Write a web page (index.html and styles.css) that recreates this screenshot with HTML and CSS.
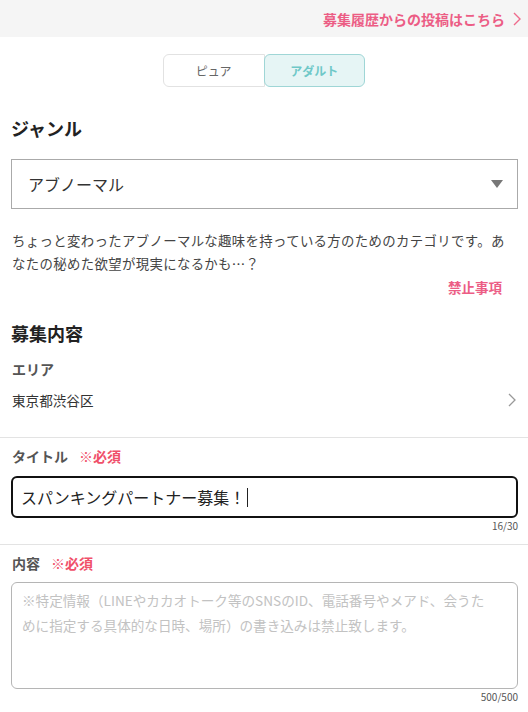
FILE: index.html
```html
<!DOCTYPE html>
<html lang="ja">
<head>
    <meta charset="UTF-8">
    <meta name="viewport" content="width=device-width, initial-scale=1.0">
    <title>募集投稿</title>
    <link rel="stylesheet" href="styles.css">
</head>
<body>
    <div class="history-bar">
        <a class="history-link" href="#">募集履歴からの投稿はこちら
            <svg class="chev" width="8" height="14" viewBox="0 0 8 14"><path d="M1 1l6 6-6 6" fill="none" stroke="#ef6b8c" stroke-width="1.4"/></svg>
        </a>
    </div>

    <div class="mode-toggle">
        <button class="mode-btn">ピュア</button>
        <button class="mode-btn active">アダルト</button>
    </div>

    <div class="container">
        <h2 class="section-title genre-title">ジャンル</h2>
        <div class="select-box">
            <span>アブノーマル</span>
            <svg width="12" height="8" viewBox="0 0 12 8"><path d="M0 0h12L6 8z" fill="#777"/></svg>
        </div>
        <p class="genre-desc">ちょっと変わったアブノーマルな趣味を持っている方のためのカテゴリです。あなたの秘めた欲望が現実になるかも…？</p>
        <div class="ban-row"><a href="#" class="ban-link">禁止事項</a></div>

        <h2 class="section-title recruit-title">募集内容</h2>
        <div class="field-label area-label">エリア</div>
        <div class="area-row">
            <span>東京都渋谷区</span>
            <svg width="8" height="14" viewBox="0 0 8 14"><path d="M1 1l6 6-6 6" fill="none" stroke="#999" stroke-width="1.3"/></svg>
        </div>
    </div>

    <div class="divider"></div>

    <div class="container">
        <div class="field-label req-label">タイトル<span class="required">※必須</span></div>
        <div class="title-input">スパンキングパートナー募集！<span class="caret"></span></div>
        <div class="counter">16/30</div>
    </div>

    <div class="divider second"></div>

    <div class="container">
        <div class="field-label req-label">内容<span class="required">※必須</span></div>
        <div class="body-input">
            <span class="placeholder">※特定情報（LINEやカカオトーク等のSNSのID、電話番号やメアド、会うために指定する具体的な日時、場所）の書き込みは禁止致します。</span>
        </div>
        <div class="counter">500/500</div>
    </div>
</body>
</html>
```

FILE: styles.css
```css
body {
    font-family: 'Noto Sans CJK JP', 'Noto Sans', sans-serif;
    color: #333;
    background-color: #fff;
    margin: 0;
    padding: 0;
}
.container {
    padding: 0 10px 0 11px;
}
.history-bar {
    background-color: #f5f5f5;
    height: 37px;
    display: flex;
    justify-content: flex-end;
    align-items: center;
    padding-right: 7px;
}
.history-link {
    color: #ec5d85;
    font-size: 14px;
    font-weight: bold;
    text-decoration: none;
    display: flex;
    align-items: center;
    gap: 8px;
}
.mode-toggle {
    display: flex;
    width: 202px;
    height: 33px;
    margin: 17px auto 0;
}
.mode-btn {
    flex: 1;
    border: 1px solid #e2e2e2;
    background-color: #fff;
    color: #666;
    font-family: inherit;
    font-size: 12px;
    border-radius: 6px 0 0 6px;
    padding: 0;
}
.mode-btn.active {
    background-color: #e6f5f5;
    border-color: #9fd6d6;
    color: #6fc8c8;
    font-weight: bold;
    border-radius: 6px;
    margin-left: -1px;
}
.section-title {
    margin: 0;
    font-size: 18px;
    font-weight: bold;
    line-height: 26px;
    color: #222;
}
.genre-title {
    margin-top: 28px;
}
.select-box {
    margin-top: 18px;
    height: 48px;
    border: 1px solid #aaa;
    display: flex;
    align-items: center;
    justify-content: space-between;
    padding: 0 14px 0 16px;
    font-size: 16px;
    color: #333;
}
.genre-desc {
    margin: 20px 0 0;
    font-size: 13.4px;
    letter-spacing: 0.35px;
    line-height: 23px;
    color: #444;
    padding-left: 1px;
}
.ban-row {
    display: flex;
    justify-content: flex-end;
    padding-right: 16px;
    margin-top: 2px;
    line-height: 20px;
}
.ban-link {
    color: #ec5d85;
    font-size: 13.5px;
    font-weight: bold;
    text-decoration: none;
}
.recruit-title {
    margin-top: 23px;
}
.field-label {
    font-size: 14px;
    font-weight: bold;
    color: #555;
    line-height: 20px;
    padding-left: 1px;
}
.area-label {
    margin-top: 13px;
}
.area-row {
    margin-top: 11px;
    display: flex;
    justify-content: space-between;
    align-items: center;
    font-size: 13.6px;
    line-height: 20px;
    color: #333;
    padding: 0 2px 27px 1px;
}
.divider {
    height: 1px;
    background-color: #e3e3e3;
}
.req-label {
    margin-top: 8px;
}
.required {
    color: #f0506a;
    margin-left: 11px;
}
.title-input {
    margin-top: 10px;
    height: 38px;
    border: 2px solid #111;
    border-radius: 6px;
    display: flex;
    align-items: center;
    padding-left: 8px;
    font-size: 16px;
    color: #222;
}
.caret {
    display: inline-block;
    width: 1px;
    height: 19px;
    background-color: #222;
    margin-left: 2px;
}
.counter {
    text-align: right;
    font-size: 10px;
    color: #555;
    line-height: 14px;
    margin-top: 1px;
}
.divider.second {
    margin-top: 11px;
}
.body-input {
    margin-top: 9px;
    height: 94px;
    border: 1px solid #b5b5b5;
    border-radius: 6px;
    padding: 5px 22px 6px 10px;
    font-size: 13.6px;
    line-height: 25px;
}
.placeholder {
    color: #c2c2c2;
}
```
